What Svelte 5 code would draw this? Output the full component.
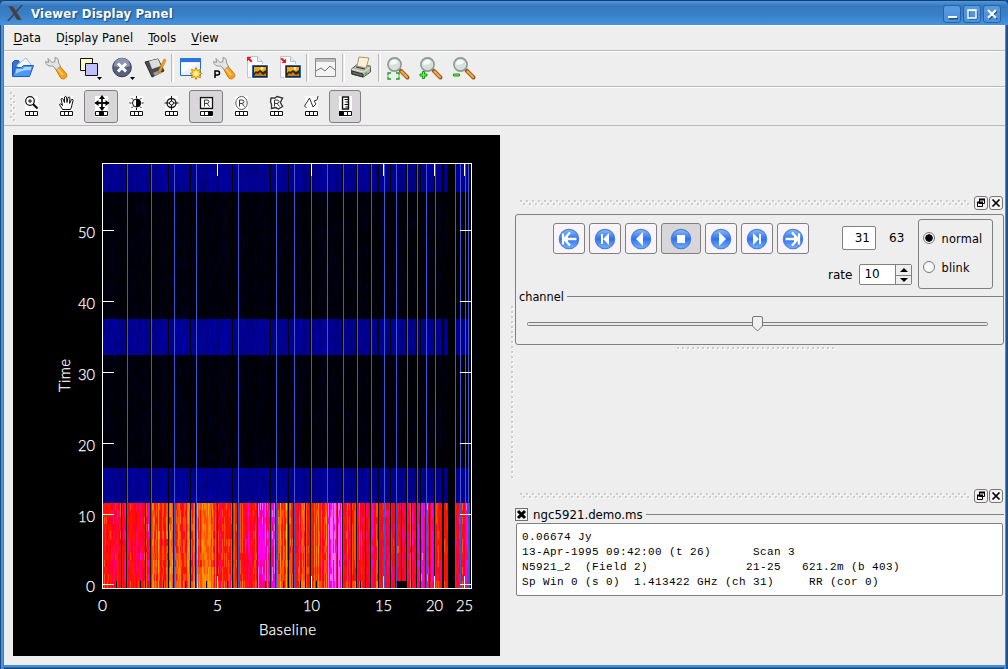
<script>
  const menus = ['Data', 'Display Panel', 'Tools', 'View'];
  const accel = [0, 1, 0, 0];
  const main = ['open', 'wrench', 'layers', 'close', 'save', '|', 'panel', 'pwrench', 'restore', 'store', '|', 'profile', '|', 'print', '|', 'zfit', 'zin', 'zout'];
  const tools = ['zoom', 'hand', 'move', 'contrast', 'target', 'rect', 'ellipse', 'poly', 'line', 'ruler'];
  const fills = { move: [4, 4], rect: [8, 4], ruler: [0, 4] };
  const player = ['first', 'prev', 'back', 'stop', 'play', 'next', 'last'];
  const log = [
    '0.06674 Jy',
    '13-Apr-1995 09:42:00 (t 26)      Scan 3',
    'N5921_2  (Field 2)              21-25   621.2m (b 403)',
    'Sp Win 0 (s 0)  1.413422 GHz (ch 31)     RR (cor 0)'
  ];

  // Raster plot: columns are baselines, rows are time slots.
  const blueLines = [127, 151, 174, 196, 238, 276, 294, 311, 327, 343, 357, 371, 384, 396, 407, 417, 426, 435, 455, 460, 465, 468];
  const gaps = new Set([121, 126, 145, 150, 168, 173, 190, 195, 217, 232, 237, 257, 270, 275, 288, 293, 305, 310, 337, 342, 351, 356, 365, 370, 378, 390, 395, 401, 406, 411, 416, 420, 425, 429, 434, 442, 443, 448, 449, 450, 451, 452, 453, 454, 470]);
  const lastGaps = new Set([116, 140, 163, 185, 206, 227, 265, 283, 300, 316, 360, 395, 396, 397, 398, 399, 400, 401, 402, 403, 404, 405]);
  const segments = [[127, 5.4], [151, 4.8], [174, 3], [196, 3.4], [217, 2.6], [238, 4.3], [257, 4.3], [276, 6.3], [294, 3.3], [311, 3.6], [327, 3.4], [343, 6.7], [357, 4.2], [371, 4.6], [384, 4.5], [396, 5.5], [407, 4.8], [417, 4.3], [426, 5.9], [435, 6.1], [455, 4.6], [465, 5], [472, 5.8]];
  const hot = ['#ffd800', '#ffa800', '#ff8000', '#ff5000', '#ff1400', '#ff0028', '#ff0080', '#ff00f0', '#ff60ff'];
  const mid = ['#000060', '#000078', '#000088', '#000098', '#0000ac', '#0000c8'];
  const dim = ['#000000', '#000005', '#00000b', '#000013', '#00001e', '#00002c'];
  let seed = 5921;
  const rnd = () => (seed = (seed * 16807) % 2147483647) / 2147483647;
  const paths = {};
  const clampIdx = (v, n) => Math.max(0, Math.min(n - 1, Math.round(v)));
  for (let x = 103; x < 471; x++) {
    if (gaps.has(x)) continue;
    const base = segments.find((s) => x < s[0])[1];
    const col = base + (rnd() + rnd() - 1) * 2.1;
    const cb = (rnd() - 0.5) * 2.2;
    let carry = 0;
    for (let r = 0; r < 60; r++) {
      const y0 = Math.round(588 - (r + 1) * 7.07);
      const y1 = Math.round(588 - r * 7.07);
      if (r === 0 && lastGaps.has(x)) continue;
      let c;
      carry = carry * 0.3 + (rnd() + rnd() - 1);
      if (y0 >= 503) c = hot[clampIdx(col + carry * 1.15 - (r === 0 ? 0.4 : 0), 9)];
      else if (y0 >= 468 || (y0 >= 319 && y0 < 355) || y0 < 192) c = mid[clampIdx(2.5 + cb * 0.8 + carry * 0.9, 6)];
      else c = dim[clampIdx(2 + cb * 0.8 + carry * 1.7, 6)];
      paths[c] = (paths[c] || '') + `M${x} ${Math.max(y0, 164)}h1V${y1}h-1z`;
    }
  }
  const raster = Object.entries(paths);
  const yTicks = [[584, 0], [514, 10], [443, 20], [372, 30], [301, 40], [230, 50]];
  const xTicks = [[102, 0], [217, 5], [311, 10], [383, 15], [434, 20], [464, 25]];
</script>

{#snippet lens(x, y)}
  <path d="M{x + 6} {y + 6}l7 7" stroke="#9a5a18" stroke-width="4" stroke-linecap="round" />
  <path d="M{x + 7} {y + 7}l5.5 5.5" stroke="#f0a848" stroke-width="2.2" stroke-linecap="round" />
  <circle cx={x} cy={y} r="6.6" fill="#d6e0dc" stroke="#8e9896" stroke-width="1.6" />
  <path d="M{x - 4.5} {y}a4.5 4.5 0 0 1 8-3q-2 4-8 3z" fill="#f5faf8" />
{/snippet}

{#snippet spanner()}
  <path d="M10.500 11l4-2.500 8 9.500q1 4-3 5-3 0-4-3z" fill="#f5a31c" stroke="#d07c10" />
  <path d="M13 12l6 7" stroke="#ffd060" stroke-width="1.5" />
  <path d="M4 2.500l4 4 3-1V1.500q4.500 1 3.500 5.500l2 3-4 4-3.500-4q-7 1-7.500-4.500l3 1z" fill="#e4e4e4" stroke="#969696" />
{/snippet}

{#snippet picture()}
  <path d="M2.5 .5h10l5 5v16h-15z" fill="#fbfbff" stroke="#c0c4d4" />
  <path d="M12.500 .5v5h5" fill="#e6e8f2" stroke="#b8bccc" />
  <path d="M7.500 9.500h15v12h-15z" fill="#3a2508" stroke="#fff" stroke-width="3" />
  <path d="M7.500 9.500h15v12h-15z" fill="#3a2508" stroke="#2060d0" />
  <path d="M9 11h12v3l-3 2-3-2-3 2-1-1-2 2z" fill="#e8a828" />
  <path d="M9 20l2-3 2 1 2-2 3 3 3-2v3z" fill="#c08018" />
  <circle cx="17" cy="12.500" r="1.400" fill="#fff0a0" />
{/snippet}

{#snippet mainIcon(n)}
  <svg class="ic" width="24" height="24" viewBox="0 0 24 24" fill="none">
    {#if n === 'open'}
      <path d="M1.500 6.500l2-2h4l1 2h5v13h-12z" fill="#2f74d8" stroke="#1c55b4" />
      <path d="M6 9l9-7 6 8-2 6H7z" fill="#f4f6fc" stroke="#a8b4cc" />
      <path d="M4.500 11.500h6l2-2h10l-4 11h-17z" fill="#4c98f0" stroke="#1c5cc4" />
      <path d="M5.500 13h6l2-2h7l-1 3q-9 0-15 4z" fill="#a8d4ff" />
    {:else if n === 'wrench'}{@render spanner()}
    {:else if n === 'pwrench'}
      {@render spanner()}
      <path d="M3 22v-7h2.500q2 0 2 2t-2 2H3" stroke="#000" stroke-width="1.500" />
    {:else if n === 'layers'}
      <path d="M3.500 2.500h12v12h-12z" fill="#ffffc8" stroke="#111" />
      <path d="M8.500 7.500h12v12h-12z" fill="#c0c0ff" stroke="#111" />
      <path d="M20 21h5l-2.500 3z" fill="#000" />
    {:else if n === 'close'}
      <circle cx="12" cy="11.500" r="9.300" fill="#586080" stroke="#343a54" />
      <path d="M4 10a8 8 0 0 1 16 0q-8 3-16 0z" fill="#8c94b0" />
      <path d="M8 7.500l8 8m0-8l-8 8" stroke="#fff" stroke-width="3" />
      <path d="M20 21h5l-2.500 3z" fill="#000" />
    {:else if n === 'save'}
      <path d="M2 6l13-3 6 12-12 6z" fill="#4c4c4c" stroke="#282828" />
      <path d="M6 5l9-2 3 7-9 3z" fill="#d8dcdc" />
      <path d="M10 17l7-3 2 3-7 3z" fill="#98a0a0" />
      <path d="M21 3l-5 11-1 3 3-2 5-11z" fill="#f8a020" stroke="#c06c08" stroke-width=".6" />
    {:else if n === 'panel'}
      <path d="M1.500 2.500h20v17h-20z" fill="#eaf1fb" stroke="#2468d8" />
      <path d="M1 2h21v4H1z" fill="#2c74e4" />
      <path d="M2 7h19l-19 10z" fill="#fff" />
      <path d="M17 11.500l1.300 3 3.200-1-1 3 2.500 1-2.500 1.200 1 3-3.200-1-1.300 2.800-1.300-2.800-3.200 1 1-3L11 17.500l2.500-1-1-3 3.200 1z" fill="#ffe040" stroke="#c88a10" />
      <circle cx="17" cy="17.500" r="1.800" fill="#fff8c0" />
    {:else if n === 'restore'}
      {@render picture()}
      <path d="M2 1h4.500L5 2.500l2.500 2.500-1.500 1.500L3.500 4 2 5.500z" fill="#f01818" />
    {:else if n === 'store'}
      {@render picture()}
      <path d="M8 7H3.500L5 5.500 2.500 3 4 1.500 6.500 4 8 2.500z" fill="#f01818" />
    {:else if n === 'profile'}
      <path d="M1.500 2.500h20v18h-20z" fill="#f4f4f4" stroke="#888" />
      <path d="M2 3h19v3H2z" fill="#bcbcbc" />
      <path d="M2 15l5-3 4 3 5-5 5 4" stroke="#707070" />
    {:else if n === 'print'}
      <path d="M1.500 13l5-4 14 1v6l-7 5-12-3z" fill="#b8b8b0" stroke="#55554c" />
      <path d="M1.500 13l12 3 7-5" stroke="#e8e8e4" />
      <path d="M7 10L9 1l10 1-3 10z" fill="#fdf0d4" stroke="#a89878" />
      <path d="M6 11l9 2M2 15l11 3v3L2 18z" stroke="#303030" fill="#686860" />
      <path d="M15 18l2-1" stroke="#30d030" stroke-width="2" />
    {:else}
      {@render lens(8.5, 8.500)}
      {#if n === 'zfit'}
        <path d="M2 19.500v-2.500h3m5 0h3v2.500m0 1V23h-3m-5 0H2v-2.500" stroke="#18a018" stroke-width="1.300" />
      {:else if n === 'zin'}
        <path d="M3.500 15.500h2v2.500h2.500v2H5.500v2.500h-2V20H1v-2h2.500z" fill="#7cf030" stroke="#189818" />
      {:else}
        <path d="M1.500 18h6v2h-6z" fill="#7cf030" stroke="#189818" />
      {/if}
    {/if}
  </svg>
{/snippet}

{#snippet toolIcon(n)}
  <svg class="ti" width="22" height="23" viewBox="0 0 22 23" fill="none" stroke="#111">
    <path d="M5 1h13v21H5z" fill="#fff" stroke="none" />
    <path d="M5.500 16.500h12v4h-12zM9.500 16v5M13.500 16v5" />
    {#if fills[n]}<rect x={5 + fills[n][0]} y="16" width={fills[n][1]} height="5" fill="#000" stroke="none" />{/if}
    {#if n === 'zoom'}
      <circle cx="10" cy="6" r="4.300" stroke-width="1.200" /><path d="M8 6h4M10 4v4" /><path d="M13 9l4.500 4.500" stroke-width="2.200" />
    {:else if n === 'hand'}
      <path d="M7.500 14.500l-3-5q1-2 3 1L6 4q1.500-1.500 2 0l1.500 3.500V2q1.500-1.500 2 0l.5 5.500 1-5q1.500-1 2 0L14.500 8.500l2-4q2-.5 1.500 1L16.500 12l-1 2.500z" fill="#fff" />
    {:else if n === 'move'}
      <path d="M12 2.500v11M5.500 8h13" stroke-width="1.800" /><path d="M12 0l3 4H9zM12 16l3-4H9zM4.500 8L8.500 5v6zM19.500 8l-4-3v6z" fill="#000" stroke="none" />
    {:else if n === 'contrast'}
      <circle cx="11.500" cy="8" r="4" /><path d="M11.500 4a4 4 0 0 1 0 8z" fill="#000" /><path d="M11.500 1v2m0 10v2M4.500 8h2m10 0h2M6.500 3L8 4.500M16.500 3L15 4.500M6.500 13L8 11.500m8.500 1.500L15 11.500" />
    {:else if n === 'target'}
      <circle cx="11.500" cy="8" r="4.500" stroke-width="1.300" /><circle cx="11.500" cy="8" r="2" /><path d="M11.500 1v5m0 4v5M4.500 8h5m4 0h5" />
    {:else if n === 'ruler'}
      <path d="M8.500 2h6v12h-6z" stroke-width="1.400" /><path d="M10.500 4.500h4M11.500 7h3M10.500 9.500h4M11.500 12h3" />
    {:else if n === 'line'}
      <path d="M4.500 11L9.500 3l3.500 9 3-3-2-3 3-1 1-4M4.500 11l2 2" stroke="#333" />
    {:else}
      {#if n === 'rect'}<path d="M5.500 2.500h12v11h-12z" stroke-width="1.300" />
      {:else if n === 'ellipse'}<ellipse cx="11.500" cy="8" rx="5.700" ry="6.500" stroke="#555" />
      {:else}<path d="M6 3l4 0 2-1.500 5.500 1.500-2 4.500 2 4-4 2.500-3-1.500-4 1V9l-1-2z" stroke="#333" stroke-width="1.400" />{/if}
      <path d="M9.500 11.500V5h2.500q2 0 2 1.700T12 8.400H9.500m2.500 0l2.500 3.100" stroke="#333" />
    {/if}
  </svg>
{/snippet}

{#snippet dockHead()}
  <div class="dockhead">
    <svg class="grip" height="7"><defs><pattern id="grip" width="6" height="7" patternUnits="userSpaceOnUse"><path d="M1 1h2v2H1zM4 4h2v2H4z" fill="#fff" /><path d="M0 0h2v2H0zM3 3h2v2H3z" fill="#cbcbcb" /></pattern></defs><rect width="450" height="7" fill="url(#grip)" /></svg>
    <span class="mini"><svg width="12" height="12" viewBox="0 0 12 12" fill="#eee" stroke="#000"><path d="M4.500 2.500h5v4h-5zM2.500 5.500h5v4h-5z" /><path d="M4 2.500h6M2 5.500h6" stroke-width="2" /></svg></span>
    <span class="mini"><svg width="12" height="12" viewBox="0 0 12 12" stroke="#000" stroke-width="1.700"><path d="M2.500 2.500l7 7m0-7l-7 7" /></svg></span>
  </div>
{/snippet}

<div class="window">
  <header class="title">
    <svg width="17" height="17" viewBox="0 0 17 17"><path d="M1 1h5l9 14h-5z" fill="#3c4248" stroke="#66727c" stroke-width=".6" /><path d="M14 0h2L2 16H0z" fill="#3c4248" /></svg>
    <h1>Viewer Display Panel</h1>
    <span class="wb"><svg width="18" height="18"><path d="M5 12.500h9" stroke="#1c4c88" stroke-width="2" transform="translate(1 1)" /><path d="M5 12h9" stroke="#fff" stroke-width="2" /></svg></span>
    <span class="wb"><svg width="18" height="18" fill="none"><path d="M6 6h8v8H6z" stroke="#1c4c88" /><path d="M5 5h8v8H5zM5 5.500h8" stroke="#fff" stroke-width="1.400" /></svg></span>
    <span class="wb"><svg width="18" height="18"><path d="M6 6l8 8m0-8l-8 8" stroke="#1c4c88" stroke-width="2" /><path d="M5 5l8 8m0-8l-8 8" stroke="#fff" stroke-width="2.200" /></svg></span>
  </header>
  <div class="body">
    <nav class="menu">
      {#each menus as m, i}<span>{m.slice(0, accel[i])}<u>{m[accel[i]]}</u>{m.slice(accel[i] + 1)}</span>{/each}
    </nav>
    <div class="bar one">
      {#each main as n}{#if n === '|'}<i class="sep"></i>{:else}<span class="cell">{@render mainIcon(n)}</span>{/if}{/each}
    </div>
    <div class="bar two">
      <svg class="bargrip" width="6" height="29"><defs><pattern id="vgrip" width="6" height="6" patternUnits="userSpaceOnUse"><path d="M1 1h2v2H1zM4 4h2v2H4z" fill="#fff" /><path d="M0 0h2v2H0zM3 3h2v2H3z" fill="#cbcbcb" /></pattern></defs><rect width="6" height="29" fill="url(#vgrip)" /></svg>
      {#each tools as n}<span class="tool" class:on={fills[n]} class:narrow={n === 'ruler'}>{@render toolIcon(n)}</span>{/each}
    </div>
    <main>
      <svg class="plot" width="487" height="521" viewBox="13 135 487 521">
        <rect x="13" y="135" width="487" height="521" fill="#000" />
        <g shape-rendering="crispEdges">
          {#each raster as [c, d]}<path {d} fill={c} />{/each}
          {#each blueLines as x}<rect {x} y="164" width="1" height="424" fill="#3a5ad0" />{/each}
          <path d="M102.500 163.500h369v425h-369z" fill="none" stroke="#fff" />
          {#each yTicks as [y]}<path d="M102 {y + 0.5}h12M460 {y + 0.5}h12" stroke="#fff" />{/each}
          {#each xTicks.slice(1) as [x]}<path d="M{x + 0.5} 163v13M{x + 0.5} 576v13" stroke="#fff" />{/each}
        </g>
        <g class="lab">
          {#each yTicks as [y, t]}<text x={t ? 78 : 86} y={y + 8} textLength={t ? 17 : 9} lengthAdjust="spacingAndGlyphs">{t}</text>{/each}
          {#each xTicks as [x, t]}<text x={t < 10 ? x - 4 : x - 8} y="611" textLength={t < 10 ? 9 : 17} lengthAdjust="spacingAndGlyphs">{t}</text>{/each}
          <text x="259" y="635" textLength="57">Baseline</text>
          <text transform="translate(70 392) rotate(-90)" textLength="33">Time</text>
        </g>
      </svg>
      <svg class="vsplit" width="4" height="173"><defs><pattern id="vs" width="4" height="5" patternUnits="userSpaceOnUse"><path d="M1 1h2v2H1z" fill="#fff" /><path d="M0 0h2v2H0z" fill="#cbcbcb" /></pattern></defs><rect width="4" height="173" fill="url(#vs)" /></svg>
      <section class="side">
        {@render dockHead()}
        <div class="anim">
          <div class="controls">
            <div class="buttons">
              {#each player as p}
                <span class="pb" class:on={p === 'stop'}>
                  <svg width="22" height="22" viewBox="0 0 22 22">
                    <defs><linearGradient id="orb" x1="0" y1="0" x2="0" y2="1"><stop offset="0" stop-color="#8cbcf8" /><stop offset=".5" stop-color="#2c70f8" /><stop offset="1" stop-color="#78b4ff" /></linearGradient></defs>
                    <circle cx="11" cy="11" r="9.700" fill="url(#orb)" stroke="#5084c8" stroke-width="1.200" />
                    <g fill="#fff" transform={['play', 'next', 'last'].includes(p) ? 'translate(22 0) scale(-1 1)' : ''}>
                      {#if p === 'stop'}<path d="M7 7h8v8H7z" />
                      {:else if p === 'back' || p === 'play'}<path d="M6 11l7-7v14z" />
                      {:else if p === 'prev' || p === 'next'}<path d="M7 6h2v10H7zM9 11l6-6v12z" />
                      {:else}<path d="M5 5.500v11M12 4.500L6 11l6 6.500M7 11h11.500" fill="none" stroke="#fff" stroke-width="2.300" /><path d="M5.500 11L10 6.500v9z" />{/if}
                    </g>
                  </svg>
                </span>
              {/each}
            </div>
            <div class="nums">
              <div class="frame"><span class="field">31</span><span class="total">63</span></div>
              <div class="rate"><label for="rate">rate</label>
                <div class="spin"><span id="rate">10</span><div class="arrows"><i><svg width="8" height="4"><path d="M0 4l4-4 4 4z" /></svg></i><i><svg width="8" height="4"><path d="M0 0h8L4 4z" /></svg></i></div></div>
              </div>
            </div>
            <div class="modes"><span><i class="radio sel"></i>normal</span><span><i class="radio"></i>blink</span></div>
          </div>
          <div class="chan"><span>channel</span><hr /></div>
          <div class="slider">
            <svg width="461" height="16"><rect x=".5" y="6.500" width="460" height="3" rx="1" fill="#e8e8e8" stroke="#808080" /><path d="M225.500 2q0-1.500 1.500-1.500h7q1.500 0 1.500 1.500v8l-5 5-5-5z" fill="#f0f0f0" stroke="#777" /></svg>
          </div>
        </div>
        <svg class="hsplit" width="160" height="4"><defs><pattern id="hs" width="5" height="4" patternUnits="userSpaceOnUse"><path d="M1 1h2v2H1z" fill="#fff" /><path d="M0 0h2v2H0z" fill="#cbcbcb" /></pattern></defs><rect width="160" height="4" fill="url(#hs)" /></svg>
        <div class="lower">
          {@render dockHead()}
          <div class="file"><span class="check"><svg width="11" height="11" viewBox="0 0 11 11"><path d="M2 2l7 7m0-7l-7 7" stroke="#000" stroke-width="3" /></svg></span><span>ngc5921.demo.ms</span><hr /></div>
          <pre>{log.join('\n')}</pre>
        </div>
      </section>
    </main>
  </div>
</div>

<style>
  :global(body) { background: #1c4a80; }
  * { box-sizing: border-box; }
  .window { width: 1008px; height: 669px; display: flex; flex-direction: column; padding: 0 3px 4px 4px; border-radius: 5px 5px 0 0; font: 12.600px 'DejaVu Sans Condensed', 'DejaVu Sans', sans-serif; font-stretch: condensed; color: #000; background: linear-gradient(90deg, #1c4a80 0 1px, #4795e0 1px 3px, #3a80cc 3px 4px, transparent 4px 1004px, #428fde 1004px 1006px, #1d548f 1006px), linear-gradient(#285e9c 0 665px, #4290e0 665px 667px, #286aae 667px 668px, #1b4474 668px); }
  .title { height: 25px; flex: none; display: flex; align-items: center; gap: 2px; margin: 0 -3px 0 -4px; padding: 1px 7px 0; border-top: 1px solid #1b3e68; border-radius: 5px 5px 0 0; background: linear-gradient(#4d98e2, #3678bc 5px, #3a80c8 14px, #4692e2); }
  h1 { flex: 1; margin: 0 0 0 5px; font-family: 'DejaVu Sans', sans-serif; font-size: 13px; letter-spacing: .2px; font-weight: bold; font-stretch: condensed; color: #fff; text-shadow: 1px 1px 1px #194475; }
  .wb { width: 18px; height: 18px; border: 1px solid #2464a8; border-radius: 3px; background: linear-gradient(#5a9ade, #4a90dc); overflow: hidden; }
  .wb svg { display: block; margin: -1px; }
  .body { flex: 1; display: flex; flex-direction: column; background: #eee; border-top: 1px solid #fff; min-height: 0; }
  .menu { height: 25px; display: flex; align-items: center; gap: 15px; padding: 0 9.500px 2px; letter-spacing: .1px; border-bottom: 1px solid #b8b8b8; }
  .menu u { text-underline-offset: 2px; }
  .bar { display: flex; align-items: center; border-top: 1px solid #fff; border-bottom: 1px solid #b8b8b8; }
  .one { height: 36px; padding: 0 0 2px 2px; }
  .cell { width: 33px; display: grid; place-items: center; }
  .ic { overflow: visible; }
  .sep { width: 3px; height: 28px; border-right: 1px solid #fff; background: linear-gradient(90deg, #bcbcbc 1px, transparent 1px); }
  .two { height: 39px; gap: 1px; padding-left: 6px; }
  .bargrip { margin: 0 -3px 0 0; }
  .tool { width: 34px; height: 33px; display: grid; place-items: center; }
  .ti { display: block; }
  .on { border: 1px solid #808080; border-radius: 3px; background: #d8d6d9; }
  .narrow { width: 32px; }
  main { flex: 1; display: flex; padding: 9px 0 0 9px; min-height: 0; }
  .plot { flex: none; display: block; }
  .lab { fill: #fff; stroke: #fff; stroke-width: .25px; font: 300 15px Lato, sans-serif; }
  .vsplit { flex: none; margin: 171px 0 0 11px; }
  .side { width: 489px; flex: none; display: flex; flex-direction: column; padding-top: 61px; }
  .dockhead { height: 14px; flex: none; display: flex; align-items: center; gap: 1px; padding: 0 1px 0 5px; }
  .grip { flex: 1; min-width: 0; width: 451px; }
  .mini { width: 14px; height: 14px; border: 1px solid #777; border-radius: 3px; background: #f4f0f4; flex: none; }
  .mini svg { display: block; }
  .anim { height: 131px; margin-top: 4px; border: 1px solid #808080; border-radius: 3px; flex: none; }
  .controls { display: flex; height: 77px; padding: 4px 0 0 37px; }
  .buttons { display: flex; gap: 4px; padding-top: 4px; width: 289px; flex: none; }
  .pb { width: 32px; height: 31px; display: grid; place-items: center; border: 1px solid #808080; border-radius: 3px; background: #f8f4fa; }
  .pb.on { width: 40px; background: #d8d6d9; }
  .nums { width: 76px; flex: none; display: flex; flex-direction: column; font-family: 'DejaVu Sans', sans-serif; font-stretch: normal; font-size: 12px; }
  .frame { display: flex; align-items: center; height: 24px; margin-top: 7px; }
  .field { width: 34px; height: 24px; border: 1px solid #808080; border-radius: 2px; background: #fff; text-align: right; padding: 4px 5px 0 0; }
  .total { margin-left: 13px; }
  .rate { display: flex; align-items: center; margin: 14px 0 0 -14px; gap: 7px; }
  .spin { display: flex; width: 53px; height: 21px; border: 1px solid #808080; border-radius: 2px; background: #fff; flex: none; }
  .spin > span { width: 35px; padding: 2px 0 0 4px; }
  .arrows { width: 16px; border-left: 1px solid #808080; background: #eee; }
  .arrows i { display: grid; place-items: center; height: 10px; }
  .arrows i + i { border-top: 1px solid #808080; height: 9px; }
  .modes { width: 75px; height: 70px; border: 1px solid #808080; border-radius: 3px; padding: 11px 0 0 4px; display: flex; flex-direction: column; gap: 15px; }
  .modes span { display: flex; align-items: center; gap: 6.500px; height: 14px; letter-spacing: .2px; }
  .radio { width: 12px; height: 12px; border: 1px solid #777; border-radius: 50%; background: #f8f8f8; }
  .sel { background: radial-gradient(#000 0 3.4px, #f4f4f4 4px); }
  .chan { display: flex; align-items: center; height: 14px; padding-left: 3px; margin-top: -3px; gap: 3px; }
  hr { flex: 1; margin: 0; border: 0; border-top: 1px solid #808080; }
  .slider { padding: 13px 0 0 11px; }
  .hsplit { margin: 2px 0 0 162px; flex: none; }
  .lower { margin-top: 138px; }
  .file { display: flex; align-items: center; height: 14px; margin-top: 4px; gap: 5px; font-size: 13.100px; }
  .file hr { margin-left: -2px; }
  .check { width: 13px; height: 13px; border: 1px solid #707070; background: #f4f4f4; flex: none; }
  .check svg { display: block; }
  pre { height: 73px; margin: 2px 0 0 1px; padding: 6px 5px; border: 1px solid #808080; border-radius: 2px; background: #fff; font: 11px/15px 'Liberation Mono', monospace; letter-spacing: .4px; width: 487px; }
</style>
